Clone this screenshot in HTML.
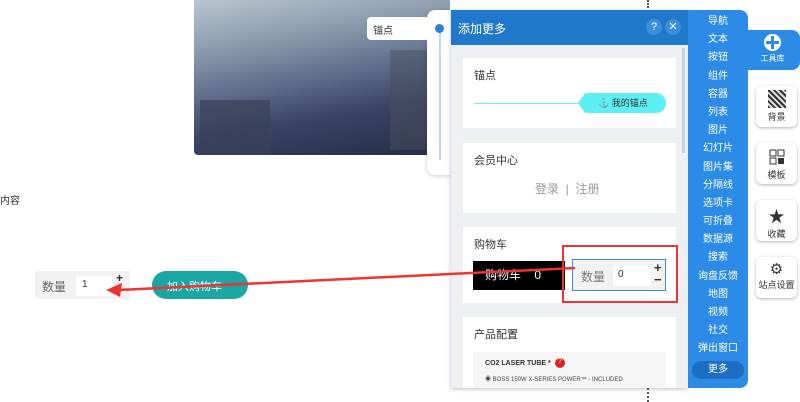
<!DOCTYPE html>
<html><head><meta charset="utf-8"><style>
*{margin:0;padding:0;box-sizing:border-box}
body{width:800px;height:402px;overflow:hidden;background:#fff;font-family:"Liberation Sans","Noto Sans CJK SC",sans-serif;position:relative;font-size:11px;color:#333}
.a{position:absolute}
.card{position:absolute;left:463px;width:213px;background:#fff}
.card .t{position:absolute;left:11px;top:9px;font-size:11px;color:#333}
.menu div{height:18.2px;line-height:18.2px;text-align:center;color:#fff;font-size:10px}
.sb{position:absolute;left:756px;width:41px;height:41px;background:#fff;border-radius:6px;box-shadow:0 1px 3px rgba(0,0,0,.3);text-align:center;font-size:9px;color:#333}
</style></head><body>
<div class="a" style="left:194px;top:0;width:256px;height:155px;border-radius:0 0 4px 4px;background:linear-gradient(170deg,#b8c6cf 0%,#8d9db0 25%,#5d6d8a 50%,#3a4466 70%,#262c44 100%)"></div>
<div class="a" style="left:200px;top:100px;width:70px;height:55px;background:#3a4058;opacity:.7"></div>
<div class="a" style="left:390px;top:50px;width:40px;height:100px;background:#4a4e60;opacity:.5"></div>
<div class="a" style="left:0;top:192px;font-size:10px">内容</div>
<div class="a" style="left:427px;top:10px;width:30px;height:165px;background:#fff;border-radius:8px;box-shadow:0 1px 4px rgba(0,0,0,.2)"></div>
<div class="a" style="left:439px;top:28px;width:2px;height:132px;background:#bcd8f2"></div>
<div class="a" style="left:435px;top:24px;width:9px;height:9px;border-radius:50%;background:#2a82d6"></div>
<div class="a" style="left:367px;top:17px;width:62px;height:23px;background:#fff;border-radius:4px;padding:5px 6px;font-size:10px">锚点</div>
<div class="a" style="left:647px;top:0;width:2px;height:8px;border-left:2px dotted #555"></div>
<div class="a" style="left:647px;top:388px;width:2px;height:14px;border-left:2px dotted #555"></div>
<div class="a" style="left:451px;top:10px;width:237px;height:378px;background:#eef0f3;box-shadow:0 1px 4px rgba(0,0,0,.25)"></div>
<div class="a" style="left:451px;top:10px;width:237px;height:35px;background:#1f78c9;color:#fff;font-size:12px;padding:10px 7px">添加更多</div>
<div class="a" style="left:646px;top:19px;width:16px;height:16px;border-radius:50%;background:#3a8edb;color:#fff;font-size:11px;text-align:center;line-height:16px">?</div>
<div class="a" style="left:665px;top:19px;width:16px;height:16px;border-radius:50%;background:#3a8edb;color:#fff;font-size:11px;text-align:center;line-height:16px">✕</div>
<div class="a" style="left:682px;top:48px;width:3px;height:105px;background:#c5d3e0"></div>
<div class="card" style="top:58px;height:70px"><div class="t">锚点</div>
<div class="a" style="left:11px;top:45px;width:110px;height:1px;background:#7ee"></div>
<div class="a" style="left:115px;top:35px;width:88px;height:20px;background:#5cf0f5;border-radius:10px;clip-path:polygon(8% 0,100% 0,100% 100%,8% 100%,0 50%);font-size:9px;line-height:20px;padding-left:20px">⚓ 我的锚点</div></div>
<div class="card" style="top:143px;height:70px"><div class="t">会员中心</div>
<div class="a" style="left:72px;top:37px;font-size:12px;color:#999">登录 &nbsp;| &nbsp;注册</div></div>
<div class="card" style="top:227px;height:76px"><div class="t">购物车</div>
<div class="a" style="left:10px;top:34px;width:92px;height:29px;background:#000;color:#fff;font-size:12px;line-height:29px;padding-left:12px">购物车 &nbsp;&nbsp;&nbsp;0</div>
<div class="a" style="left:109px;top:32px;width:94px;height:32px;border:1px solid #3a8edb;background:#f2f2f2"><span class="a" style="left:8px;top:8px;font-size:12px;color:#777">数量</span><span class="a" style="left:40px;top:5px;width:38px;height:21px;background:#fff;padding:4px 5px;font-size:10px">0</span><span class="a" style="left:81px;top:2px;font-weight:bold;font-size:13px;line-height:12px">+<br>−</span></div></div>
<div class="card" style="top:317px;height:71px"><div class="t">产品配置</div>
<div class="a" style="left:10px;top:35px;width:193px;height:36px;background:#f6f6f6"><span class="a" style="left:12px;top:8px;font-size:7px;font-weight:bold">CO2 LASER TUBE *</span><span class="a" style="left:82px;top:6px;width:10px;height:10px;border-radius:50%;background:#d22;color:#fff;font-size:7px;text-align:center">?</span><span class="a" style="left:12px;top:22px;font-size:6px;color:#444">◉ BOSS 150W X-SERIES POWER™ - INCLUDED</span></div></div>
<div class="a menu" style="left:688px;top:10px;width:60px;height:378px;background:#2b8be6;border-radius:0 8px 8px 0;padding-top:3px">
<div>导航</div><div>文本</div><div>按钮</div><div>组件</div><div>容器</div><div>列表</div><div>图片</div><div>幻灯片</div><div>图片集</div><div>分隔线</div><div>选项卡</div><div>可折叠</div><div>数据源</div><div>搜索</div><div>询盘反馈</div><div>地图</div><div>视频</div><div>社交</div><div>弹出窗口</div>
<div style="margin:2px 4px;background:#1c6ec2;border-radius:9px">更多</div></div>
<div class="a" style="left:745px;top:30px;width:55px;height:40px;background:#2b8be6;border-radius:0 8px 8px 0;color:#fff;font-size:8px;text-align:center;padding-top:4px"><div style="width:17px;height:17px;border-radius:50%;background:#fff;margin:0 auto 2px;position:relative"><div class="a" style="left:7px;top:2px;width:3px;height:13px;background:#2b8be6"></div><div class="a" style="left:2px;top:7px;width:13px;height:3px;background:#2b8be6"></div></div>工具库</div>
<div class="sb" style="top:86px"><div style="width:18px;height:18px;margin:4px auto 2px;background:repeating-linear-gradient(45deg,#333 0 2px,#ddd 2px 4px)"></div>背景</div>
<div class="sb" style="top:143px"><svg width="18" height="18" style="margin-top:5px" viewBox="0 0 18 18"><rect x="2" y="2" width="6" height="6" fill="none" stroke="#333"/><rect x="10" y="2" width="6" height="6" fill="none" stroke="#333"/><rect x="2" y="10" width="6" height="6" fill="none" stroke="#333"/><rect x="10" y="10" width="6" height="6" fill="#333"/></svg><div>模板</div></div>
<div class="sb" style="top:200px"><div style="font-size:16px;margin-top:3px">★</div>收藏</div>
<div class="sb" style="top:257px"><div style="font-size:15px;margin-top:3px">⚙</div>站点设置</div>
<div class="a" style="left:35px;top:271px;width:95px;height:28px;background:#f2f2f2"><span class="a" style="left:7px;top:7px;font-size:12px;color:#666">数量</span><span class="a" style="left:41px;top:5px;width:36px;height:20px;background:#fff;padding:3px 6px;font-size:10px">1</span><span class="a" style="left:81px;top:0;font-weight:bold;font-size:12px">+</span></div>
<div class="a" style="left:152px;top:271px;width:96px;height:28px;background:#1aa6a2;border-radius:14px;color:#fff;font-size:11px;padding:7px 15px">加入购物车</div>
<div class="a" style="left:562px;top:245px;width:116px;height:58px;border:2px solid #e33"></div>
<svg class="a" style="left:0;top:0" width="800" height="402"><line x1="575" y1="268" x2="118" y2="290" stroke="#e33" stroke-width="2.5"/><polygon points="106,290 122,283 120,297" fill="#e33"/></svg>
</body></html>
